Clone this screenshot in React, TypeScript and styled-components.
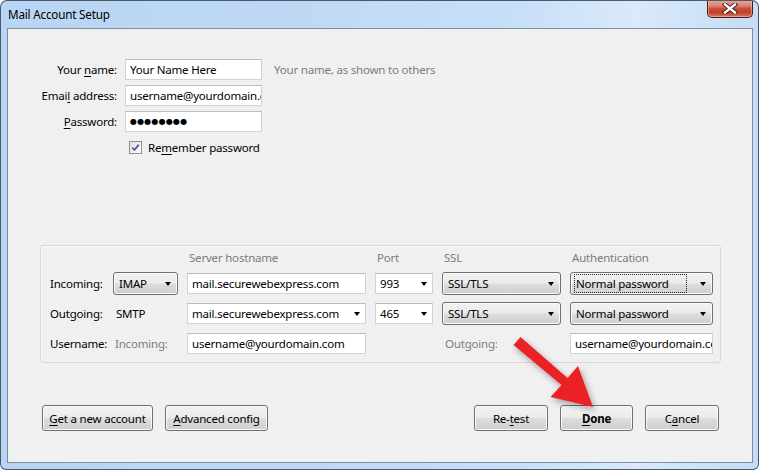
import React from 'react';
import styled, { createGlobalStyle, css } from 'styled-components';

const FONT = `"Noto Sans", "Liberation Sans", sans-serif`;

const Global = createGlobalStyle`
  html, body { margin: 0; padding: 0; width: 759px; height: 470px; overflow: hidden; background: #ffffff; }
  #root { width: 759px; height: 470px; }
  *, *::before, *::after { box-sizing: border-box; }
`;

const Window = styled.div`
  position: relative;
  width: 759px;
  height: 470px;
  display: flex;
  flex-direction: column;
  border: 1px solid rgba(28, 38, 52, 0.72);
  border-radius: 7px 7px 6px 6px;
  background: linear-gradient(90deg, #b8d5f3 0%, #bfd9f5 40%, #c8dff8 68%, #dae9fb 84%, #c4dcf5 100%);
  padding: 0 5px 6px 6px;
  font-family: ${FONT};
  font-size: 11.5px;
  letter-spacing: -0.2px;
  color: #000;
  overflow: hidden;
`;

const TitleBar = styled.div`
  height: 27px;
  flex: none;
  display: flex;
  align-items: flex-start;
`;

const Title = styled.div`
  padding: 5px 0 0 1px;
  font-size: 11.7px;
  color: #000;
  line-height: 17px;
`;

const CloseButton = styled.div`
  margin-left: auto;
  width: 46px;
  height: 18px;
  margin-top: -1px;
  border: 1px solid #4a1e16;
  border-top: none;
  border-radius: 0 0 5px 5px;
  background: linear-gradient(180deg, #e9a99b 0%, #d98472 35%, #c8503a 50%, #c23f28 72%, #d27a60 100%);
  box-shadow: inset 0 0 0 1px rgba(255, 210, 200, 0.45);
  display: flex;
  align-items: center;
  justify-content: center;
`;

const Client = styled.div`
  flex: 1;
  display: flex;
  flex-direction: column;
  border: 1px solid #7d8ea0;
  background: #f0f0f0;
`;

const IdentityGrid = styled.div`
  margin-top: 30px;
  display: grid;
  grid-template-columns: 109px 137px auto;
  grid-template-rows: 21px 21px 21px 20px;
  column-gap: 8px;
  row-gap: 5px;
  align-items: center;
`;

const Label = styled.div<{ $align?: 'left' | 'right'; $muted?: boolean; $pad?: number }>`
  text-align: ${(p) => p.$align ?? 'left'};
  color: ${(p) => (p.$muted ? '#7c7c7c' : '#000')};
  padding-left: ${(p) => p.$pad ?? 0}px;
  white-space: nowrap;
  line-height: 16px;
`;

const Hint = styled.div`
  color: #7c7c7c;
  padding-left: 4px;
  white-space: nowrap;
`;

const Field = styled.div<{ $h?: number }>`
  height: ${(p) => p.$h ?? 21}px;
  background: #fff;
  border: 1px solid #cfd2d6;
  border-top-color: #b9bcc1;
  display: flex;
  align-items: center;
  padding: 0 0 0 4px;
  overflow: hidden;
  white-space: nowrap;
  color: #000;
`;

const FieldText = styled.span`
  flex: 1;
  overflow: hidden;
  white-space: nowrap;
`;

const Dots = styled.span`
  font-family: "DejaVu Sans", sans-serif;
  font-size: 8px;
  letter-spacing: 0.2px;
  line-height: 10px;
`;

const CheckRow = styled.label`
  grid-column: 2 / span 2;
  display: flex;
  align-items: center;
  gap: 6px;
  padding-left: 4px;
  white-space: nowrap;
`;

const CheckBox = styled.span`
  width: 13px;
  height: 13px;
  border: 1px solid #8e8f8f;
  background: linear-gradient(135deg, #dcdcdc 0%, #f4f4f4 55%, #ffffff 100%);
  display: flex;
  align-items: center;
  justify-content: center;
`;

const ServerPanel = styled.div`
  margin: 88px 0 0 32px;
  width: 681px;
  border: 1px solid #d6d8da;
  border-radius: 3px;
  box-shadow: inset 1px 1px 0 #fbfbfb;
  padding: 5px 0 7px 9px;
  display: grid;
  grid-template-columns: 54px 65px 179px 58px 119px 143px;
  grid-template-rows: 14px 23px 23px 23px;
  column-gap: 9px;
  row-gap: 7px;
  align-items: center;
`;

const Header = styled.div<{ $col: number }>`
  grid-column: ${(p) => p.$col};
  color: #7c7c7c;
  padding-left: 2px;
  white-space: nowrap;
  line-height: 14px;
`;

const buttonFace = css`
  border: 1px solid #707070;
  border-radius: 3px;
  background: linear-gradient(180deg, #f2f2f2 0%, #ebebeb 48%, #dddddd 52%, #cfcfcf 100%);
  box-shadow: inset 0 0 0 1px #fbfbfb;
  color: #000;
  font-family: ${FONT};
  font-size: 11.5px;
  letter-spacing: -0.2px;
`;

const SelectBox = styled.div`
  ${buttonFace};
  height: 23px;
  display: flex;
  align-items: center;
  padding: 0 5px 0 4px;
  white-space: nowrap;
`;

const SelectLabel = styled.span<{ $focus?: boolean }>`
  flex: 1;
  height: 17px;
  display: flex;
  align-items: center;
  padding-left: 1px;
  margin-right: 14px;
  outline: ${(p) => (p.$focus ? '1px dotted #222' : 'none')};
`;

const Arrow = styled.span<{ $gap?: number; $right?: number }>`
  flex: none;
  width: 0;
  height: 0;
  border-left: 3.5px solid transparent;
  border-right: 3.5px solid transparent;
  border-top: 4px solid #000;
  margin-left: ${(p) => p.$gap ?? 0}px;
  margin-right: ${(p) => p.$right ?? 1}px;
`;

const ButtonBar = styled.div`
  margin-top: 42px;
  display: flex;
  justify-content: space-between;
  padding: 0 33px 0 34px;
`;

const ButtonGroup = styled.div`
  display: flex;
  gap: 12px;
`;

const Button = styled.button<{ $w: number; $default?: boolean }>`
  ${buttonFace};
  width: ${(p) => p.$w}px;
  height: 26px;
  padding: 0;
  font-weight: ${(p) => (p.$default ? 700 : 400)};
  cursor: default;
`;

const Overlay = styled.svg`
  position: absolute;
  top: -1px;
  left: -1px;
  width: 759px;
  height: 470px;
  pointer-events: none;
`;

const Key = styled.u`
  text-decoration: underline;
  text-underline-offset: 2px;
`;

function Select({ value, focus }: { value: string; focus?: boolean }) {
  return (
    <SelectBox>
      <SelectLabel $focus={focus}>{value}</SelectLabel>
      <Arrow />
    </SelectBox>
  );
}

function Combo({ value }: { value: string }) {
  return (
    <Field>
      <FieldText>{value}</FieldText>
      <Arrow $gap={4} $right={5} />
    </Field>
  );
}

export default function App() {
  return (
    <>
      <Global />
      <Window>
        <TitleBar>
          <Title>Mail Account Setup</Title>
          <CloseButton>
            <svg width="16" height="11" viewBox="0 0 16 11">
              <path d="M3 1.5 L13 9.5 M13 1.5 L3 9.5" stroke="#3d1710" strokeWidth="4.2" strokeLinecap="square" fill="none" />
              <path d="M3 1.5 L13 9.5 M13 1.5 L3 9.5" stroke="#ffffff" strokeWidth="2.4" strokeLinecap="square" fill="none" />
            </svg>
          </CloseButton>
        </TitleBar>
        <Client>
          <IdentityGrid>
            <Label $align="right">
              Your <Key>n</Key>ame:
            </Label>
            <Field>
              <FieldText>Your Name Here</FieldText>
            </Field>
            <Hint>Your name, as shown to others</Hint>

            <Label $align="right">
              Emai<Key>l</Key> address:
            </Label>
            <Field>
              <FieldText>username@yourdomain.com</FieldText>
            </Field>
            <div />

            <Label $align="right">
              <Key>P</Key>assword:
            </Label>
            <Field>
              <Dots>●●●●●●●●</Dots>
            </Field>
            <div />

            <div />
            <CheckRow>
              <CheckBox>
                <svg width="9" height="9" viewBox="0 0 9 9">
                  <path d="M1.2 4.6 L3.5 7 L7.8 1.6" stroke="#4a5d8c" strokeWidth="1.8" fill="none" />
                </svg>
              </CheckBox>
              <span>
                Re<Key>m</Key>ember password
              </span>
            </CheckRow>
          </IdentityGrid>

          <ServerPanel>
            <div />
            <div />
            <Header $col={3}>Server hostname</Header>
            <Header $col={4}>Port</Header>
            <Header $col={5}>SSL</Header>
            <Header $col={6}>Authentication</Header>

            <Label>Incoming:</Label>
            <Select value="IMAP" />
            <Field>
              <FieldText>mail.securewebexpress.com</FieldText>
            </Field>
            <Combo value="993" />
            <Select value="SSL/TLS" />
            <Select value="Normal password" focus />

            <Label>Outgoing:</Label>
            <Label $pad={3}>SMTP</Label>
            <Combo value="mail.securewebexpress.com" />
            <Combo value="465" />
            <Select value="SSL/TLS" />
            <Select value="Normal password" />

            <Label>Username:</Label>
            <Label $muted $pad={2}>
              Incoming:
            </Label>
            <Field>
              <FieldText>username@yourdomain.com</FieldText>
            </Field>
            <div />
            <Label $muted $pad={3}>
              Outgoing:
            </Label>
            <Field>
              <FieldText>username@yourdomain.com</FieldText>
            </Field>
          </ServerPanel>

          <ButtonBar>
            <ButtonGroup>
              <Button $w={111}>
                <Key>G</Key>et a new account
              </Button>
              <Button $w={103}>
                <Key>A</Key>dvanced config
              </Button>
            </ButtonGroup>
            <ButtonGroup>
              <Button $w={74}>
                Re-<Key>t</Key>est
              </Button>
              <Button $w={73} $default>
                <Key>D</Key>one
              </Button>
              <Button $w={74}>
                C<Key>a</Key>ncel
              </Button>
            </ButtonGroup>
          </ButtonBar>
        </Client>
        <Overlay viewBox="0 0 759 470">
          <defs>
            <filter id="arrowShadow" x="-30%" y="-30%" width="160%" height="160%">
              <feDropShadow dx="2" dy="3" stdDeviation="3" floodColor="#000" floodOpacity="0.35" />
            </filter>
          </defs>
          <polygon
            points="513.5,345 520.5,337 567.5,378 578,366 593,407 550.5,397 561.5,385"
            fill="#ea2127"
            filter="url(#arrowShadow)"
          />
        </Overlay>
      </Window>
    </>
  );
}
